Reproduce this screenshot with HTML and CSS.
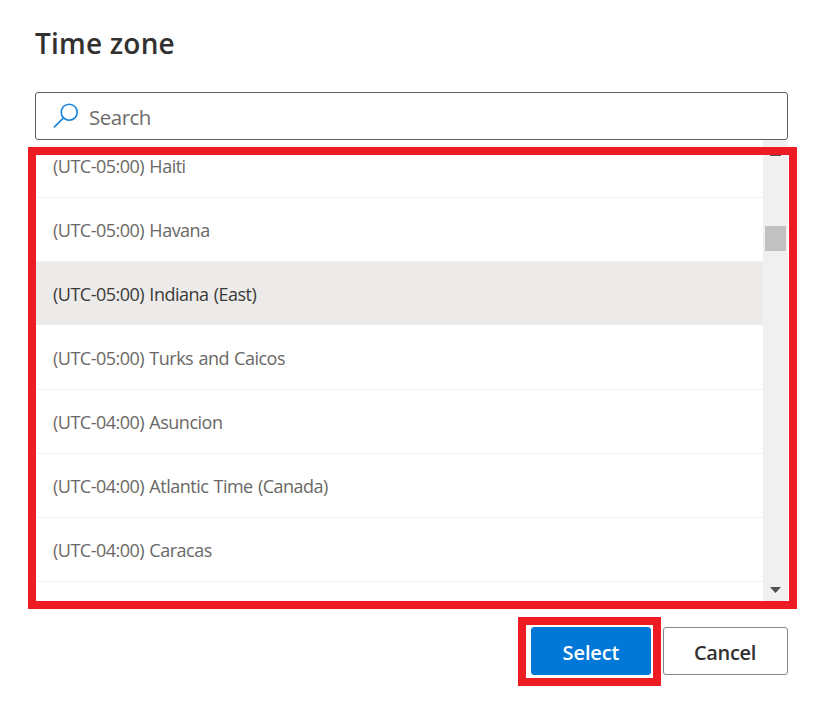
FILE: index.html
```
<!DOCTYPE html>
<html lang="en">
<head>
    <meta charset="utf-8">
    <title>Time zone</title>
    <link rel="stylesheet" href="styles.css">
</head>
<body>
    <div class="panel">
        <h1><span>Time zone</span></h1>
        <div class="search">
            <svg width="26" height="26" viewBox="0 0 26 26">
                <circle cx="16.2" cy="9.2" r="8"/>
                <path d="M10.5 14.9L1 24.4"/>
            </svg>
            <span>Search</span>
        </div>
        <div class="listbox">
            <ul class="zones">
                <li><span>(UTC-05:00) Haiti</span></li>
                <li><span>(UTC-05:00) Havana</span></li>
                <li class="selected"><span>(UTC-05:00) Indiana (East)</span></li>
                <li><span>(UTC-05:00) Turks and Caicos</span></li>
                <li><span>(UTC-04:00) Asuncion</span></li>
                <li><span>(UTC-04:00) Atlantic Time (Canada)</span></li>
                <li><span>(UTC-04:00) Caracas</span></li>
            </ul>
            <div class="scrollbar">
                <div class="up"></div>
                <div class="thumb"></div>
                <svg class="down" width="11" height="6" viewBox="0 0 11 6"><path d="M0 0H11L5.5 6Z"/></svg>
            </div>
            <div class="mark mark-list"></div>
        </div>
        <div class="actions">
            <div class="action">
                <button class="primary"><span>Select</span></button>
                <div class="mark mark-select"></div>
            </div>
            <button class="cancel"><span>Cancel</span></button>
        </div>
    </div>
</body>
</html>
```
FILE: styles.css
```
* {
    box-sizing: border-box;
}
body {
    margin: 0;
    background: #fff;
    font-family: "Open Sans", "Noto Sans", sans-serif;
    color: #323130;
}
.panel {
    min-height: 710px;
    padding: 24px 35px 0;
}
h1 {
    margin: 0 0 28px;
    height: 40px;
    line-height: 39px;
    font-size: 28px;
    font-weight: 600;
    letter-spacing: 0.2px;
}
.search {
    display: flex;
    align-items: center;
    height: 48px;
    padding: 2px 0 0 17px;
    border: 1px solid #605e5c;
    border-radius: 3px;
    font-size: 20.5px;
    letter-spacing: -0.5px;
    color: #6e6c6a;
}
.search svg {
    margin: -2px 10px 0 0;
    fill: none;
    stroke: #1482dc;
    stroke-width: 1.6;
}
.listbox {
    position: relative;
    display: flex;
    height: 461px;
}
.zones {
    flex: 1;
    margin: 0;
    padding: 0;
    list-style: none;
    overflow: hidden;
}
.zones li {
    height: 64px;
    padding-left: 18px;
    border-bottom: 1px solid #f1f1f1;
    line-height: 65px;
    font-size: 18px;
    letter-spacing: -0.5px;
    word-spacing: 1px;
    color: #6a6866;
}
.zones li:first-child {
    margin-top: -6px;
}
.zones li.selected {
    background: #edebe9;
    border-bottom-color: #fff;
    color: #3b3a39;
}
.scrollbar {
    display: flex;
    flex-direction: column;
    align-items: center;
    width: 25px;
    background: #f0f0f0;
}
.up {
    width: 11px;
    height: 1px;
    margin-top: 15px;
    background: #505050;
}
.thumb {
    width: 21px;
    height: 25px;
    margin-top: 70px;
    background: #c1c1c1;
}
.down {
    margin-top: auto;
    margin-bottom: 8px;
    fill: #505050;
}
.mark {
    position: absolute;
    border: 8px solid #ed1c24;
}
.mark-list {
    left: -7px;
    right: -9px;
    top: 7px;
    bottom: -8px;
}
.mark-select {
    left: -13px;
    right: -10px;
    top: -10px;
    bottom: -11px;
}
.actions {
    display: flex;
    justify-content: flex-end;
    gap: 12px;
    margin-top: 26px;
}
.action {
    position: relative;
}
button {
    display: block;
    height: 48px;
    padding: 2px 0 0;
    border: 1px solid #8a8886;
    border-radius: 3px;
    background: #fff;
    font-family: inherit;
    font-size: 20px;
    font-weight: 600;
    color: #323130;
}
.primary {
    width: 120px;
    border-color: #0078d4;
    background: #0078d7;
    letter-spacing: -0.1px;
    color: #fff;
}
.cancel {
    width: 125px;
    padding-right: 1px;
    letter-spacing: -0.3px;
}
```
